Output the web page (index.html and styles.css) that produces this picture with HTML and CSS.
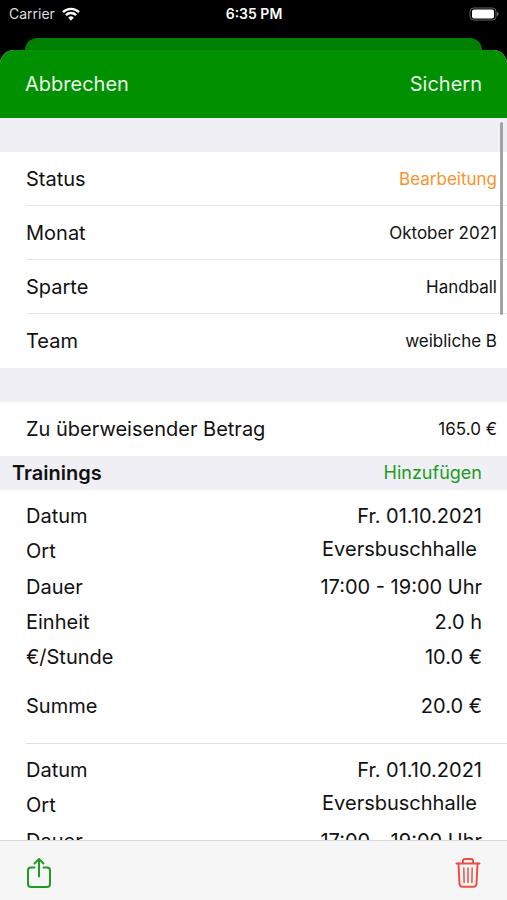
FILE: index.html
```
<!DOCTYPE html>
<html lang="de">
<head>
    <meta charset="UTF-8">
    <meta name="viewport" content="width=device-width, initial-scale=1.0">
    <title>Abrechnung bearbeiten</title>
    <link rel="stylesheet" href="styles.css">
</head>
<body>
    <div class="status-bar">
        <div class="carrier">
            <span>Carrier</span>
            <svg class="wifi" viewBox="0 0 18 14" aria-hidden="true">
                <path d="M1 5.2a11.4 11.4 0 0 1 16 0" />
                <path d="M3.9 8.1a7.3 7.3 0 0 1 10.2 0" />
                <path class="wifi-dot" d="M9 13.6 6.2 10.7a4 4 0 0 1 5.6 0z" />
            </svg>
        </div>
        <div class="time">6:35 PM</div>
        <div class="battery">
            <svg viewBox="0 0 30 14" aria-hidden="true">
                <rect class="battery-frame" x="1" y="1" width="26" height="12" rx="3.5" />
                <rect x="3" y="2.5" width="22" height="9" rx="2" fill="#fff" />
                <path d="M28 5v4c1-.3 1.700-1.100 1.700-2s-.7-1.700-1.700-2z" fill="#666" />
            </svg>
        </div>
    </div>
    <div class="back-sheet"></div>
    <div class="sheet">
        <header class="nav">
            <button type="button">Abbrechen</button>
            <button type="button">Sichern</button>
        </header>
        <main class="content">
            <div class="scroll-bar"></div>
            <dl class="list">
                <div class="row">
                    <dt>Status</dt>
                    <dd class="editing">Bearbeitung</dd>
                </div>
                <div class="row">
                    <dt>Monat</dt>
                    <dd>Oktober 2021</dd>
                </div>
                <div class="row">
                    <dt>Sparte</dt>
                    <dd>Handball</dd>
                </div>
                <div class="row">
                    <dt>Team</dt>
                    <dd>weibliche B</dd>
                </div>
            </dl>
            <dl class="list">
                <div class="row">
                    <dt>Zu überweisender Betrag</dt>
                    <dd>165.0 €</dd>
                </div>
            </dl>
            <div class="section-header">
                <h2>Trainings</h2>
                <button type="button">Hinzufügen</button>
            </div>
            <div class="trainings">
                <dl class="training">
                    <div class="line">
                        <dt>Datum</dt>
                        <dd>Fr. 01.10.2021</dd>
                    </div>
                    <div class="line place">
                        <dt>Ort</dt>
                        <dd><button type="button">Eversbuschhalle</button></dd>
                    </div>
                    <div class="line">
                        <dt>Dauer</dt>
                        <dd>17:00 - 19:00 Uhr</dd>
                    </div>
                    <div class="line">
                        <dt>Einheit</dt>
                        <dd>2.0 h</dd>
                    </div>
                    <div class="line">
                        <dt>€/Stunde</dt>
                        <dd>10.0 €</dd>
                    </div>
                    <div class="line sum">
                        <dt>Summe</dt>
                        <dd>20.0 €</dd>
                    </div>
                </dl>
                <dl class="training">
                    <div class="line">
                        <dt>Datum</dt>
                        <dd>Fr. 01.10.2021</dd>
                    </div>
                    <div class="line place">
                        <dt>Ort</dt>
                        <dd><button type="button">Eversbuschhalle</button></dd>
                    </div>
                    <div class="line">
                        <dt>Dauer</dt>
                        <dd>17:00 - 19:00 Uhr</dd>
                    </div>
                </dl>
            </div>
        </main>
        <footer class="toolbar">
            <button type="button" class="share" aria-label="Teilen">
                <svg viewBox="0 0 26 32" aria-hidden="true">
                    <path d="M8.500 10.500H5a3 3 0 0 0-3 3V27a3 3 0 0 0 3 3h16a3 3 0 0 0 3-3V13.500a3 3 0 0 0-3-3h-3.500" />
                    <path d="M13 19.500V2.500M8.500 6.500L13 2l4.500 4.500" />
                </svg>
            </button>
            <button type="button" class="delete" aria-label="Löschen">
                <svg viewBox="0 0 26 32" aria-hidden="true">
                    <path d="M1.500 6.500h23M8 6.500V4a2 2 0 0 1 2-2h6a2 2 0 0 1 2 2v2.500" />
                    <path d="M3.500 6.500l1 20.500a3 3 0 0 0 3 2.700h11a3 3 0 0 0 3-2.700l1-20.500" />
                    <path class="thin" d="M8.800 11l.3 14.500M13 11v14.500M17.200 11l-.3 14.500" />
                </svg>
            </button>
        </footer>
    </div>
</body>
</html>
```
FILE: styles.css
```
* {
    box-sizing: border-box;
}
body {
    font-family: Inter, "Liberation Sans", sans-serif;
    font-size: 20px;
    line-height: 24px;
    color: #111;
    background-color: #000;
    margin: 0;
    height: 100vh;
    display: flex;
    flex-direction: column;
    overflow: hidden;
}
button {
    font: inherit;
    color: inherit;
    background: none;
    border: none;
    padding: 0;
    cursor: pointer;
}
dl,
dd,
h2 {
    margin: 0;
}
.status-bar {
    display: grid;
    grid-template-columns: 1fr auto 1fr;
    align-items: center;
    height: 38px;
    padding: 0 8px 10px 9px;
    font-size: 14px;
    color: #fff;
}
.carrier {
    display: flex;
    align-items: center;
    gap: 7px;
    color: #ddd;
}
.wifi {
    width: 18px;
    height: 14px;
    fill: none;
    stroke: #fff;
    stroke-width: 2.4;
}
.wifi-dot {
    fill: #fff;
    stroke: none;
}
.time {
    font-weight: 600;
}
.battery {
    display: flex;
    justify-content: flex-end;
}
.battery svg {
    width: 30px;
    height: 14px;
}
.battery-frame {
    fill: none;
    stroke: #666;
}
.back-sheet {
    height: 12px;
    margin: 0 25px;
    background-color: #008000;
    border-radius: 12px 12px 0 0;
}
.sheet {
    flex: 1;
    min-height: 0;
    display: flex;
    flex-direction: column;
    background-color: #f0eff5;
    border-radius: 14px 14px 0 0;
    overflow: hidden;
}
.nav {
    display: flex;
    justify-content: space-between;
    align-items: center;
    flex-shrink: 0;
    height: 68px;
    padding: 0 25px;
    background-color: #009000;
    color: #e8f8e8;
}
.content {
    position: relative;
    flex: 1;
    min-height: 0;
    overflow: hidden;
}
.scroll-bar {
    position: absolute;
    top: 4px;
    right: 4px;
    width: 3px;
    height: 193px;
    background-color: #a3a3a6;
    border-radius: 2px;
}
.list {
    margin-top: 34px;
    padding-left: 26px;
    background-color: #fff;
}
.row {
    display: flex;
    justify-content: space-between;
    align-items: center;
    height: 54px;
    padding-right: 10px;
    border-bottom: 1px solid #e6e6e8;
}
.row:last-child {
    border-bottom: none;
}
.row dd {
    font-size: 17px;
}
.row .editing {
    color: #f7922d;
}
.section-header {
    display: flex;
    justify-content: space-between;
    align-items: center;
    height: 34px;
    padding: 0 25px 0 12px;
}
.section-header h2 {
    font-size: 20px;
    font-weight: 600;
}
.section-header button {
    font-size: 18px;
    color: #1c9c1c;
}
.trainings {
    background-color: #fff;
    padding-left: 26px;
}
.training {
    padding: 8px 25px 20px 0;
    border-bottom: 1px solid #e0e0e2;
}
.line {
    display: flex;
    justify-content: space-between;
    align-items: center;
    height: 35px;
}
.place {
    height: 36px;
}
.place dd {
    align-self: flex-start;
}
.place button {
    padding-right: 5px;
    line-height: 32px;
}
.sum {
    margin-top: 14px;
}
.toolbar {
    display: flex;
    justify-content: space-between;
    flex-shrink: 0;
    height: 60px;
    padding: 16px 26px 0;
    background-color: #f6f6f6;
    border-top: 1px solid #d8d8d8;
}
.toolbar button {
    height: 32px;
}
.toolbar svg {
    display: block;
    width: 26px;
    height: 32px;
    fill: none;
    stroke: currentColor;
    stroke-width: 2;
    stroke-linecap: round;
    stroke-linejoin: round;
}
.toolbar .thin {
    stroke-width: 1.5;
}
.share {
    color: #1f9a22;
}
.delete {
    color: #ec4f47;
}
```
